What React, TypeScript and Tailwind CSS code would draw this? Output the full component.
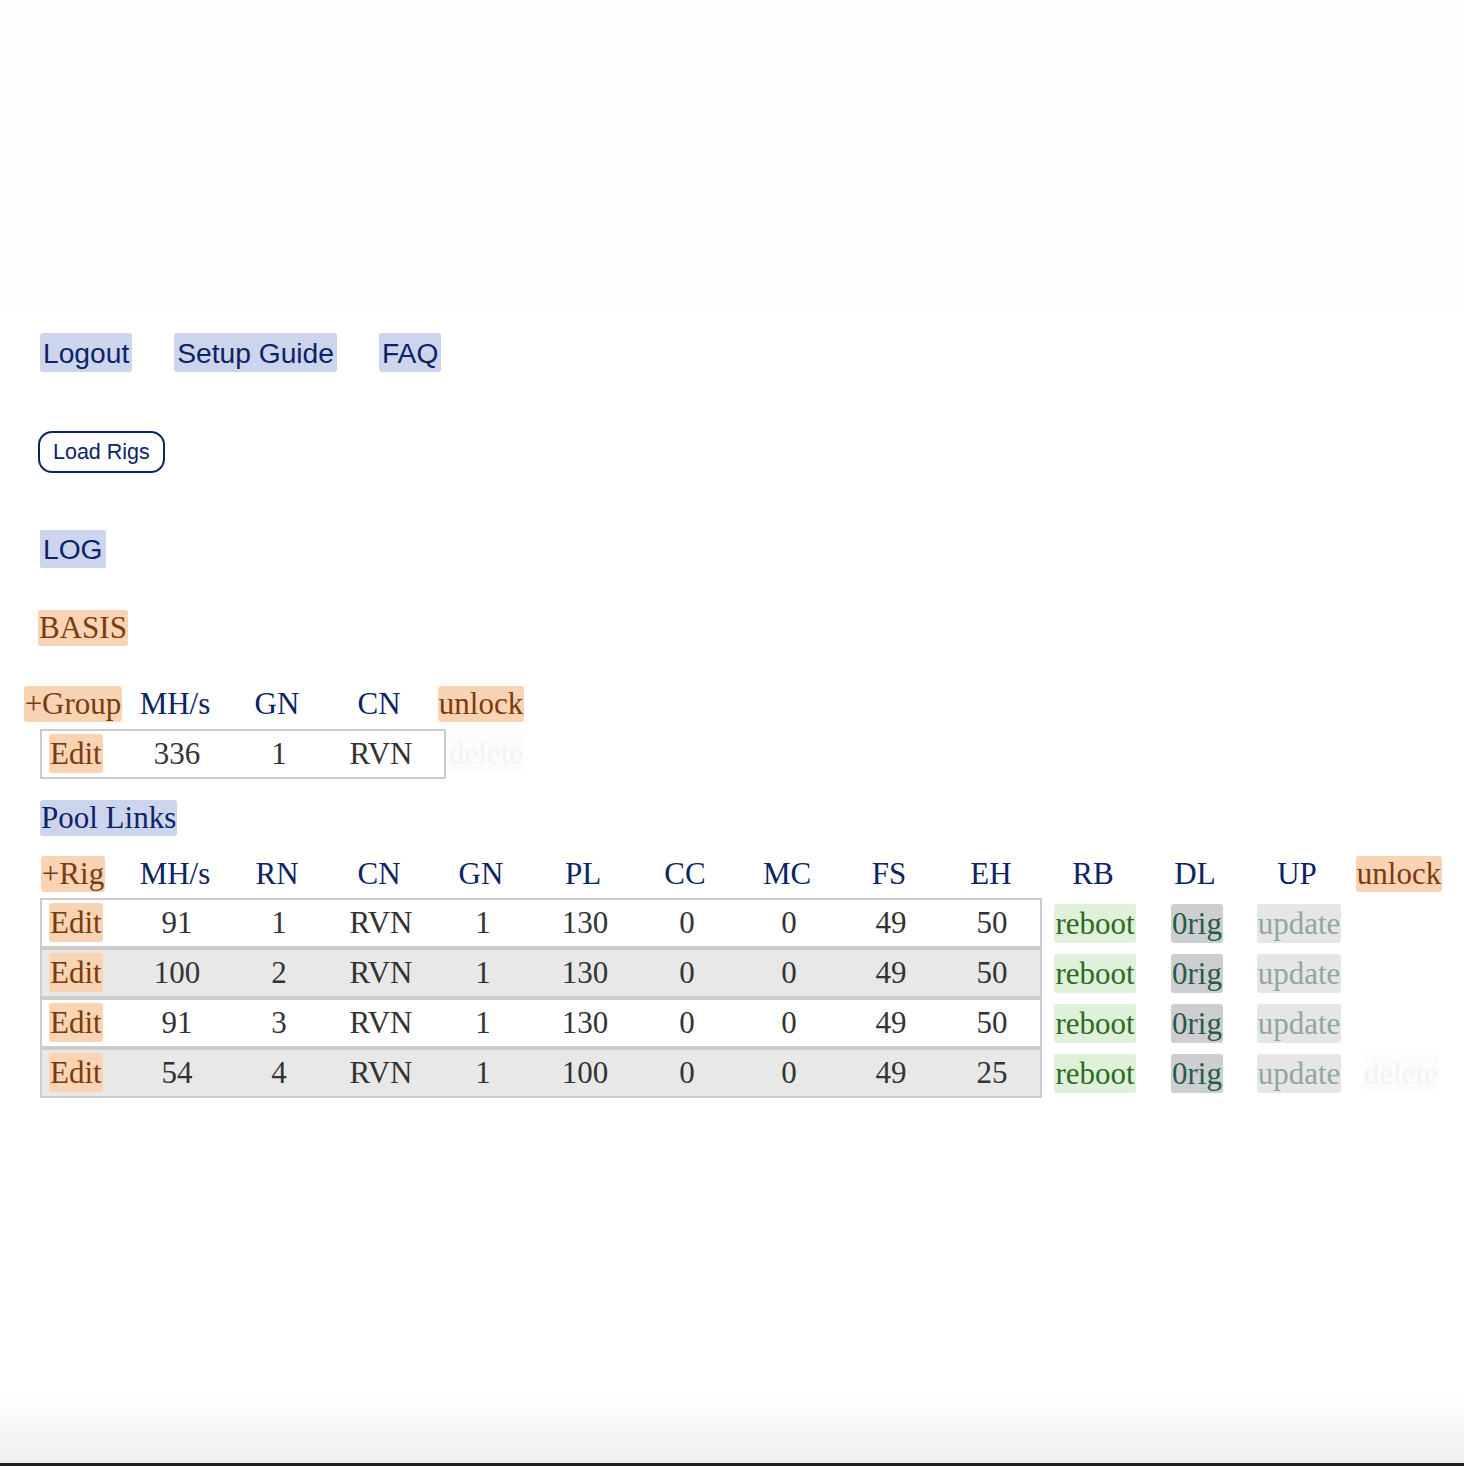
const serif = "font-['Liberation_Serif','Times_New_Roman',serif]";
const sans = "font-['Liberation_Sans',Arial,sans-serif]";

const navLinks = ["Logout", "Setup Guide", "FAQ"];

const rigCols = ["MH/s", "RN", "CN", "GN", "PL", "CC", "MC", "FS", "EH", "RB", "DL", "UP"];

const rigs = [
  { mh: 91, rn: 1, pl: 130, eh: 50 },
  { mh: 100, rn: 2, pl: 130, eh: 50 },
  { mh: 91, rn: 3, pl: 130, eh: 50 },
  { mh: 54, rn: 4, pl: 100, eh: 25 },
];

function Peach({ children, h = "h-[36px] leading-[36px]" }: { children: React.ReactNode; h?: string }) {
  return <span className={`${h} inline-block rounded-[3px] bg-[#f9d4b4] px-px text-[#7a3b0f]`}>{children}</span>;
}

function HeadCell({ children }: { children: React.ReactNode }) {
  return <div className="flex h-[36px] w-[102px] shrink-0 items-center justify-center leading-[36px] text-[#0b2463]">{children}</div>;
}

function DataCell({ children, className = "" }: { children: React.ReactNode; className?: string }) {
  return <div className={`w-[102px] shrink-0 text-center text-[#333333] ${className}`}>{children}</div>;
}

function Btn({ children, className }: { children: React.ReactNode; className: string }) {
  return <span className={`inline-block h-[39px] rounded-[3px] px-px leading-[39px] ${className}`}>{children}</span>;
}

export default function App() {
  return (
    <div className={`flex min-h-[1466px] flex-col bg-white ${serif} text-[31px]`}>
      <div className="h-[312px] shrink-0 bg-[#fdfdfd]" />

      <main className="flex-1 pl-[40px]">
        <nav className={`mt-[21px] flex gap-[42px] ${sans} text-[28.2px]`}>
          {navLinks.map((l) => (
            <a key={l} className="h-[39px] rounded-[3px] bg-[#cdd4ee] px-[3px] pt-px leading-[38px] text-[#0b2463]">
              {l}
            </a>
          ))}
        </nav>

        <button
          className={`-ml-[2px] mt-[59px] block h-[42px] rounded-[14px] border-2 border-[#0b2463] px-[13px] leading-[38px] text-[21.5px] text-[#0b2463] ${sans}`}
        >
          Load Rigs
        </button>

        <div className={`mt-[57px] flex ${sans} text-[28.2px]`}>
          <span className="h-[38px] rounded-[2px] bg-[#cdd4ee] px-[3px] pt-px leading-[37px] text-[#0b2463]">LOG</span>
        </div>

        <div className="-ml-[2px] mt-[42px] flex">
          <Peach>BASIS</Peach>
        </div>

        {/* group table */}
        <div className="-ml-[18px] mt-[40px] flex">
          <HeadCell>
            <Peach>+Group</Peach>
          </HeadCell>
          <HeadCell>MH/s</HeadCell>
          <HeadCell>GN</HeadCell>
          <HeadCell>CN</HeadCell>
          <HeadCell>
            <Peach>unlock</Peach>
          </HeadCell>
        </div>
        <div className="mt-[7px] flex items-center">
          <div className="flex h-[50px] w-[406px] items-center border-2 border-[#cccccc] pr-[12px]">
            <div className="w-[84px] shrink-0 pl-[7px]">
              <Peach h="h-[39px] leading-[39px]">Edit</Peach>
            </div>
            <DataCell>336</DataCell>
            <DataCell>1</DataCell>
            <DataCell>RVN</DataCell>
          </div>
          <span className="ml-[2px]">
            <Btn className="bg-[#fcfcfc] text-[#f3f3f3]">delete</Btn>
          </span>
        </div>

        <div className="mt-[21px] flex">
          <span className="h-[36px] rounded-[3px] bg-[#cdd4ee] px-px leading-[36px] text-[#0b2463]">Pool Links</span>
        </div>

        {/* rig table */}
        <div className="-ml-[18px] mt-[20px] flex">
          <HeadCell>
            <Peach>+Rig</Peach>
          </HeadCell>
          {rigCols.map((c) => (
            <HeadCell key={c}>{c}</HeadCell>
          ))}
          <HeadCell>
            <Peach>unlock</Peach>
          </HeadCell>
        </div>

        <div className="mt-[6px] flex flex-col">
          {rigs.map((r, i) => (
            <div key={r.rn} className="flex items-center">
              <div
                className={`flex h-[50px] w-[1002px] items-center border-2 border-[#cccccc] ${
                  i % 2 === 1 ? "bg-[#e8e8e8]" : "bg-white"
                }`}
              >
                <div className="w-[84px] shrink-0 pl-[7px]">
                  <Peach h="h-[39px] leading-[39px]">Edit</Peach>
                </div>
                <DataCell>{r.mh}</DataCell>
                <DataCell>{r.rn}</DataCell>
                <DataCell>RVN</DataCell>
                <DataCell>1</DataCell>
                <DataCell>{r.pl}</DataCell>
                <DataCell>0</DataCell>
                <DataCell>0</DataCell>
                <DataCell>49</DataCell>
                <DataCell className="!w-[98px] pl-[2px]">{r.eh}</DataCell>
              </div>
              <div className="ml-[2px] flex">
                <div className="flex w-[102px] justify-center">
                  <Btn className="bg-[#dff0db] text-[#2d6a22]">reboot</Btn>
                </div>
                <div className="flex w-[102px] justify-center">
                  <Btn className="bg-[#cdcecf] text-[#255c48]">0rig</Btn>
                </div>
                <div className="flex w-[102px] justify-center">
                  <Btn className="bg-[#e6e6e6] text-[#8fa89b]">update</Btn>
                </div>
                {i === rigs.length - 1 && (
                  <div className="flex w-[102px] justify-center">
                    <Btn className="bg-[#fcfcfc] text-[#f3f3f3]">delete</Btn>
                  </div>
                )}
              </div>
            </div>
          ))}
        </div>
      </main>

      <div className="h-[68px] shrink-0 bg-gradient-to-b from-white to-[#eeeeee]" />
      <div className="h-[3px] shrink-0 bg-[#1f1f1f]" />
    </div>
  );
}
